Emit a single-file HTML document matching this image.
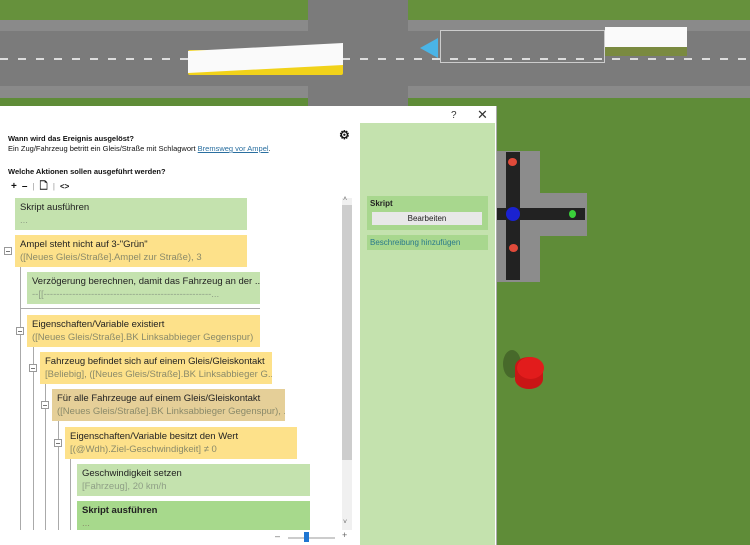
<!DOCTYPE html>
<html><head><meta charset="utf-8"><style>
*{margin:0;padding:0;box-sizing:border-box}
body{width:750px;height:545px;overflow:hidden;position:relative;background:#5f8c38;font-family:"Liberation Sans",sans-serif}
.a{position:absolute}
.blk{position:absolute;height:32px;padding:3px 5px;font-size:9.5px;line-height:13px;white-space:nowrap;overflow:hidden;color:#222}
.blk .s{color:#8a8a6a}
.g{background:#c4e2ae}.y{background:#fde18a}.t{background:#e5cf98}.dg{background:#a7d98c}
.g .s{color:#8f9f86}
.box{position:absolute;width:8px;height:8px;border:1px solid #999;background:#fff}
.box:after{content:"";position:absolute;left:1px;top:3px;width:4px;height:1px;background:#777}
.vl{position:absolute;width:1px;background:#aaa}
</style></head><body>
<!-- scene -->
<div class="a" style="left:0;top:0;width:750px;height:20px;background:#66913c"></div>
<div class="a" style="left:0;top:20px;width:750px;height:78px;background:#8a8a8a"></div>
<div class="a" style="left:0;top:31px;width:750px;height:55px;background:#7b7b7b"></div>
<div class="a" style="left:308px;top:0;width:100px;height:106px;background:#7b7b7b"></div>
<div class="a" style="left:0;top:58px;width:750px;height:2px;background:repeating-linear-gradient(90deg,#ddd 0 8px,transparent 8px 18px)"></div>
<div class="a" style="left:188px;top:50px;width:155px;height:25px;background:#f1d21a;border-radius:2px"></div>
<div class="a" style="left:188px;top:47px;width:155px;height:22px;background:#fafafa;transform:skewY(-3deg)"></div>
<div class="a" style="left:605px;top:28px;width:82px;height:28px;background:#7a8a40"></div>
<div class="a" style="left:605px;top:27px;width:82px;height:20px;background:#fafafa"></div>
<div class="a" style="left:440px;top:30px;width:165px;height:33px;border:1px solid #ccc"></div>
<div class="a" style="left:420px;top:38px;width:0;height:0;border-top:10px solid transparent;border-bottom:10px solid transparent;border-right:18px solid #4ab4e6"></div>
<!-- dialog -->
<div class="a" style="left:0;top:106px;width:497px;height:439px;background:#fff;border-right:1px solid #aaa"></div>
<div class="a" style="left:451px;top:110px;font-size:10px;color:#333">?</div>
<div class="a" style="left:477px;top:107px;font-size:13px;color:#333">✕</div>
<div class="a" style="left:360px;top:123px;width:135px;height:422px;background:#c4e2ae"></div>
<div class="a" style="left:367px;top:196px;width:121px;height:34px;background:#a8d78e"></div>
<div class="a" style="left:370px;top:199px;font-size:8px;font-weight:bold;color:#222">Skript</div>
<div class="a" style="left:372px;top:212px;width:110px;height:13px;background:#e8e8e8;font-size:8px;text-align:center;line-height:13px;color:#222">Bearbeiten</div>
<div class="a" style="left:367px;top:235px;width:121px;height:15px;background:#a8d78e;font-size:8px;line-height:15px;padding-left:3px;color:#2a7a8a">Beschreibung hinzufügen</div>
<div class="a" style="left:8px;top:134px;font-size:7.5px;font-weight:bold;color:#111">Wann wird das Ereignis ausgelöst?</div>
<div class="a" style="left:8px;top:144px;font-size:7.5px;color:#111">Ein Zug/Fahrzeug betritt ein Gleis/Straße mit Schlagwort <span style="color:#2a6fa0;text-decoration:underline">Bremsweg vor Ampel</span>.</div>
<div class="a" style="left:339px;top:128px;font-size:12px;font-weight:bold;color:#111">⚙</div>
<div class="a" style="left:8px;top:167px;font-size:7.5px;font-weight:bold;color:#111">Welche Aktionen sollen ausgeführt werden?</div>
<div class="a" style="left:11px;top:179px;font-size:10px;font-weight:bold;color:#111;letter-spacing:5px">+–<span style="font-size:8px;color:#bbb">|</span>🗋<span style="font-size:8px;color:#bbb">|</span><span style="font-size:8px;letter-spacing:0">&lt;&gt;</span></div>
<!-- tree -->
<div class="vl" style="left:20px;top:262px;height:268px"></div>
<div class="vl" style="left:33px;top:345px;height:185px"></div>
<div class="vl" style="left:45px;top:382px;height:148px"></div>
<div class="vl" style="left:58px;top:419px;height:111px"></div>
<div class="vl" style="left:70px;top:457px;height:73px"></div>
<div class="a" style="left:20px;top:308px;width:240px;height:1px;background:#aaa"></div>
<div class="blk g" style="left:15px;top:198px;width:232px">Skript ausführen<br><span class="s">...</span></div>
<div class="box" style="left:4px;top:247px"></div>
<div class="blk y" style="left:15px;top:235px;width:232px">Ampel steht nicht auf 3-"Grün"<br><span class="s">([Neues Gleis/Straße].Ampel zur Straße), 3</span></div>
<div class="blk g" style="left:27px;top:272px;width:233px">Verzögerung berechnen, damit das Fahrzeug an der ...<br><span class="s">--[[-----------------------------------------------------...</span></div>
<div class="box" style="left:16px;top:327px"></div>
<div class="blk y" style="left:27px;top:315px;width:233px">Eigenschaften/Variable existiert<br><span class="s">([Neues Gleis/Straße].BK Linksabbieger Gegenspur)</span></div>
<div class="box" style="left:29px;top:364px"></div>
<div class="blk y" style="left:40px;top:352px;width:232px">Fahrzeug befindet sich auf einem Gleis/Gleiskontakt<br><span class="s">[Beliebig], ([Neues Gleis/Straße].BK Linksabbieger G...</span></div>
<div class="box" style="left:41px;top:401px"></div>
<div class="blk t" style="left:52px;top:389px;width:233px">Für alle Fahrzeuge auf einem Gleis/Gleiskontakt<br><span class="s">([Neues Gleis/Straße].BK Linksabbieger Gegenspur), ...</span></div>
<div class="box" style="left:54px;top:439px"></div>
<div class="blk y" style="left:65px;top:427px;width:232px">Eigenschaften/Variable besitzt den Wert<br><span class="s">[(@Wdh).Ziel-Geschwindigkeit] ≠ 0</span></div>
<div class="blk g" style="left:77px;top:464px;width:233px">Geschwindigkeit setzen<br><span class="s">[Fahrzeug], 20 km/h</span></div>
<div class="blk dg" style="left:77px;top:501px;width:233px;height:29px;font-weight:bold">Skript ausführen<br><span class="s" style="font-weight:normal">...</span></div>
<!-- scrollbar -->
<div class="a" style="left:342px;top:198px;width:10px;height:332px;background:#f0f0f0"></div>
<div class="a" style="left:342px;top:205px;width:10px;height:255px;background:#cdcdcd"></div>
<div class="a" style="left:343px;top:196px;font-size:7px;color:#666">˄</div>
<div class="a" style="left:343px;top:519px;font-size:7px;color:#666">˅</div>
<div class="a" style="left:275px;top:531px;font-size:9px;color:#666">–</div>
<div class="a" style="left:288px;top:537px;width:47px;height:2px;background:#ccc"></div>
<div class="a" style="left:304px;top:532px;width:5px;height:10px;background:#1f76d2"></div>
<div class="a" style="left:342px;top:530px;font-size:9px;color:#666">+</div>
<!-- signal -->
<div class="a" style="left:497px;top:151px;width:43px;height:131px;background:#8c8c8c"></div>
<div class="a" style="left:497px;top:193px;width:90px;height:43px;background:#8c8c8c"></div>
<div class="a" style="left:506px;top:152px;width:14px;height:128px;background:#222"></div>
<div class="a" style="left:497px;top:208px;width:88px;height:12px;background:#222"></div>
<div class="a" style="left:508px;top:158px;width:9px;height:8px;border-radius:50%;background:#e04a3a"></div>
<div class="a" style="left:509px;top:244px;width:9px;height:8px;border-radius:50%;background:#e04a3a"></div>
<div class="a" style="left:506px;top:207px;width:14px;height:14px;border-radius:50%;background:#1a22d0"></div>
<div class="a" style="left:569px;top:210px;width:7px;height:8px;border-radius:50%;background:#3ad03a"></div>
<div class="a" style="left:503px;top:350px;width:18px;height:28px;border-radius:50%;background:#3d5a25;opacity:.7"></div>
<div class="a" style="left:515px;top:357px;width:28px;height:32px;border-radius:14px/10px;background:#c91515"></div>
<div class="a" style="left:517px;top:357px;width:27px;height:22px;border-radius:50%;background:#e21c1c"></div>
</body></html>
